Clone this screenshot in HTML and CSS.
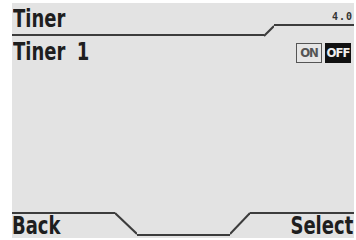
FILE: index.html
```html
<!DOCTYPE html>
<html>
<head>
<meta charset="utf-8">
<link rel="stylesheet" href="styles.css">
</head>
<body>
<div class="screen">
  <div class="header">
    <div class="title"><span class="txt">Tiner</span></div>
    <svg class="hslant" width="10" height="34" viewBox="0 0 10 34"><path d="M0 33 L10 23" stroke="#3c3c3c" stroke-width="2" fill="none"/></svg>
    <div class="version"><span class="ver">4.0</span></div>
  </div>
  <div class="row">
    <span class="txt wide">Tiner 1</span>
    <div class="toggle">
      <span class="opt on">ON</span>
      <span class="opt off">OFF</span>
    </div>
  </div>
  <div class="body"></div>
  <div class="footer">
    <div class="fleft"><span class="txt">Back</span></div>
    <svg class="fslant" width="22" height="24" viewBox="0 0 22 24"><path d="M0 1 L22 22" stroke="#3c3c3c" stroke-width="2" fill="none"/></svg>
    <div class="fmid"></div>
    <svg class="fslant" width="20" height="24" viewBox="0 0 20 24"><path d="M0 22 L20 1" stroke="#3c3c3c" stroke-width="2" fill="none"/></svg>
    <div class="fright"><span class="txt">Select</span></div>
  </div>
</div>
</body>
</html>
```
FILE: styles.css
```css
html, body {
  margin: 0;
  padding: 0;
  background: #ffffff;
}
.screen {
  margin: 3px 2px 0 12px;
  width: 342px;
  height: 235px;
  background: #e3e3e3;
  display: flex;
  flex-direction: column;
  font-family: "DejaVu Sans", sans-serif;
  font-weight: bold;
  color: #1e1e1e;
}
.txt {
  display: inline-block;
  font-size: 25px;
  line-height: 22px;
  transform: scaleX(0.72);
  transform-origin: left center;
  white-space: nowrap;
}
.wide { word-spacing: 7px; }
.header {
  display: flex;
  align-items: flex-start;
  height: 35px;
}
.title {
  width: 251px;
  height: 26px;
  padding-top: 5px;
  border-bottom: 2px solid #3c3c3c;
  padding-left: 1px;
}
.hslant { display: block; }
.version {
  flex: 1;
  height: 21px;
  border-bottom: 2px solid #3c3c3c;
  text-align: right;
  padding-right: 1px;
}
.ver {
  display: inline-block;
  font-family: "DejaVu Sans Mono", monospace;
  font-size: 10px;
  line-height: 10px;
  margin-top: 9px;
  letter-spacing: 1px;
  color: #333;
}
.row {
  display: flex;
  justify-content: space-between;
  align-items: flex-start;
  padding-left: 1px;
  padding-right: 3px;
  padding-top: 3px;
  height: 23px;
}
.toggle {
  display: flex;
  gap: 3px;
  margin-top: 2px;
}
.opt {
  display: block;
  width: 26px;
  height: 20px;
  box-sizing: border-box;
  font-family: "DejaVu Sans Condensed", sans-serif;
  font-size: 13px;
  line-height: 18px;
  text-align: center;
  letter-spacing: -1px;
}
.on {
  border: 1px solid #555;
  color: #555;
  background: #e6e6e6;
}
.off {
  background: #111;
  color: #eee;
  line-height: 20px;
}
.body { flex: 1; }
.footer {
  display: flex;
  align-items: flex-start;
  height: 26px;
}
.fleft {
  width: 103px;
  height: 24px;
  border-top: 2px solid #3c3c3c;
  padding-top: 1px;
  box-sizing: border-box;
}
.fslant { display: block; }
.fmid {
  width: 93px;
  height: 22px;
  border-bottom: 2px solid #3c3c3c;
}
.fright {
  flex: 1;
  height: 24px;
  border-top: 2px solid #3c3c3c;
  text-align: right;
  padding-right: 1px;
  padding-top: 1px;
  box-sizing: border-box;
}
.fright .txt {
  transform-origin: right center;
}
```
